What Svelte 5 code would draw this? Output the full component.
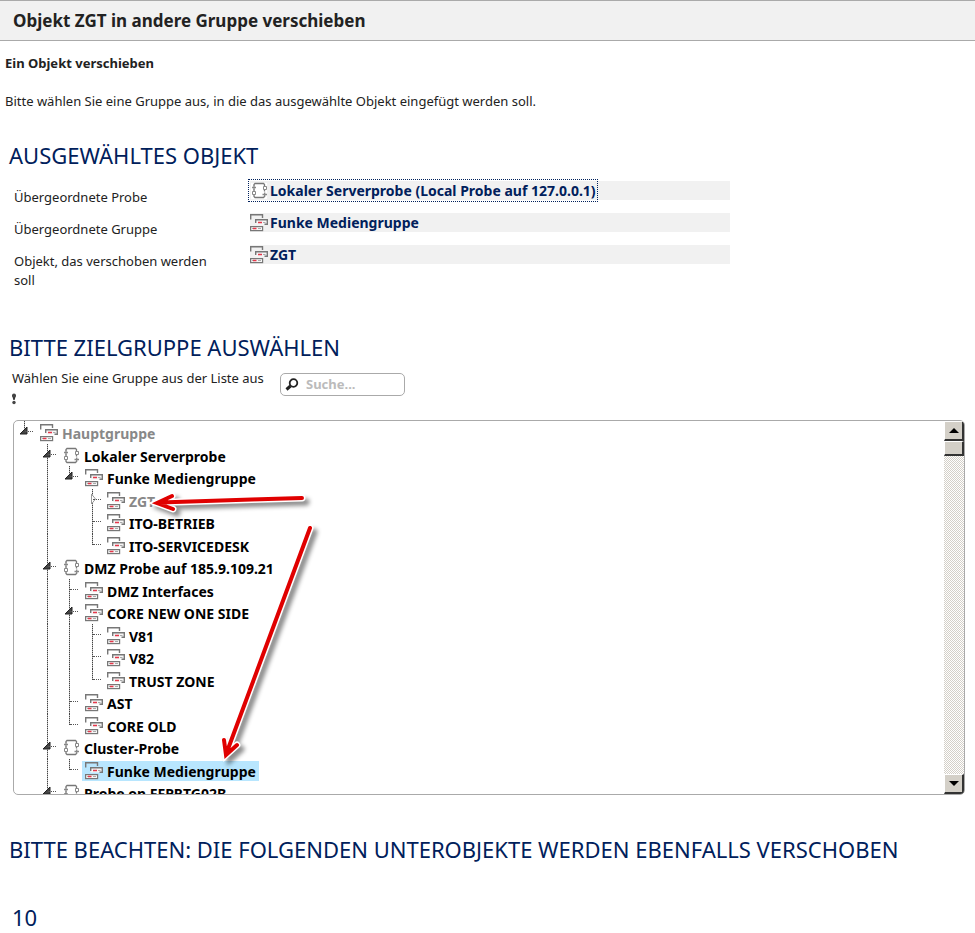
<script>
  const details = [
    { label: 'Übergeordnete Probe', value: 'Lokaler Serverprobe (Local Probe auf 127.0.0.1)', kind: 'probe', focused: true },
    { label: 'Übergeordnete Gruppe', value: 'Funke Mediengruppe', kind: 'group' },
    { label: 'Objekt, das verschoben werden soll', value: 'ZGT', kind: 'group' }
  ];

  // guides: "|" passing line, " " empty, "+" branch, "L" last branch
  const nodes = [
    { name: 'Hauptgruppe', kind: 'group', guides: 'L', toggle: 'open', muted: true },
    { name: 'Lokaler Serverprobe', kind: 'probe', guides: ' +', toggle: 'open' },
    { name: 'Funke Mediengruppe', kind: 'group', guides: ' |L', toggle: 'open' },
    { name: 'ZGT', kind: 'group', guides: ' | +', toggle: 'closed', muted: true },
    { name: 'ITO-BETRIEB', kind: 'group', guides: ' | +' },
    { name: 'ITO-SERVICEDESK', kind: 'group', guides: ' | L' },
    { name: 'DMZ Probe auf 185.9.109.21', kind: 'probe', guides: ' +', toggle: 'open' },
    { name: 'DMZ Interfaces', kind: 'group', guides: ' |+' },
    { name: 'CORE NEW ONE SIDE', kind: 'group', guides: ' |+', toggle: 'open' },
    { name: 'V81', kind: 'group', guides: ' ||+' },
    { name: 'V82', kind: 'group', guides: ' ||+' },
    { name: 'TRUST ZONE', kind: 'group', guides: ' ||L' },
    { name: 'AST', kind: 'group', guides: ' |+' },
    { name: 'CORE OLD', kind: 'group', guides: ' |L' },
    { name: 'Cluster-Probe', kind: 'probe', guides: ' +', toggle: 'open' },
    { name: 'Funke Mediengruppe', kind: 'group', guides: ' |L' },
    { name: 'Probe on FFPRTG02B', kind: 'probe', guides: ' +', toggle: 'open' }
  ];

  const guideClass = { '|': 'pass', ' ': 'empty', '+': 'branch', L: 'last' };
  let selected = $state(15);
</script>

{#snippet icon(kind)}
  {#if kind === 'probe'}
    <svg class="icon" width="20" height="18" viewBox="0 0 20 18" fill="none" aria-hidden="true">
      <rect x="1" y="1" width="16" height="16" fill="#fff" />
      <path d="M4 4V2.500L5 1.500H13.500L14.500 2.500V4.500M14.500 7.500V9.500M4 7V9M4 13V14.500L5 15.500H13.500L14.500 14.500V14" stroke="#777" stroke-width="1.300" />
      <path d="M2 5.500H6M4 3.500V7.500M12.500 12.500H17M14.700 10.500V14.500" stroke="#888" stroke-width="1.300" />
      <path d="M13.500 4.500H16.500V7.500H13.500ZM2.500 9.500H5.500V12.500H2.500Z" fill="#fff" stroke="#888" />
    </svg>
  {:else}
    <svg class="icon" width="20" height="18" viewBox="0 0 20 18" fill="none" stroke="#777" aria-hidden="true">
      <path d="M5.500 5.500H17.500V10.500H5.500Z" fill="#f6f6f6" stroke="none" />
      <path d="M.7 5.500V.7H12.500V4" stroke-width="1.400" />
      <path d="M5.700 9V5.700H17.300V10.300H14.500" stroke-width="1.400" />
      <rect x=".6" y="12.600" width="12" height="4" fill="#f6f6f6" stroke-width="1.200" />
      <path d="M2 14.500H4M8 14.500H11M13 8.500H15.500" stroke="#aaa" />
      <path d="M3 14.500H6.500M8 8.500H12" stroke="#e5374a" stroke-width="1.500" />
    </svg>
  {/if}
{/snippet}

<header><h1>Objekt ZGT in andere Gruppe verschieben</h1></header>

<main>
  <p class="intro"><strong>Ein Objekt verschieben</strong></p>
  <p class="intro text">Bitte wählen Sie eine Gruppe aus, in die das ausgewählte Objekt eingefügt werden soll.</p>

  <h2>Ausgewähltes Objekt</h2>
  <dl>
    {#each details as d}
      <div class="detail">
        <dt>{d.label}</dt>
        <dd><a href="#objekt" class:focused={d.focused}>{@render icon(d.kind)}{d.value}</a></dd>
      </div>
    {/each}
  </dl>

  <h2>Bitte Zielgruppe auswählen</h2>
  <div class="chooser">
    <label for="suche">Wählen Sie eine Gruppe aus der Liste aus
      <svg width="4" height="12" viewBox="0 0 4 12" aria-hidden="true"><path d="M0 2H4L2.600 7H1.400Z" fill="#333" /><circle cx="2" cy="2.500" r="2" fill="#444" /><circle cx="2" cy="9.500" r="1.700" fill="#444" /></svg>
    </label>
    <div class="search">
      <svg width="14" height="13" viewBox="0 0 14 13" fill="none" stroke="#222" aria-hidden="true"><circle cx="8.500" cy="5" r="3.800" stroke-width="1.800" /><path d="M5.500 8L1.500 11.500" stroke-width="3" /></svg>
      <input id="suche" type="text" placeholder="Suche..." />
    </div>
  </div>

  <div class="picker">
    <ul role="tree" aria-label="Zielgruppe">
      {#each nodes as n, i}
        <li role="treeitem" aria-selected={selected === i} aria-level={n.guides.length}>
          {#each n.guides.split('') as g, c}
            <span class="guide {guideClass[g]}">
              {#if n.toggle && c === n.guides.length - 1}
                <svg class="toggle" width="10" height="12" viewBox="0 0 10 12" aria-hidden="true">
                  {#if n.toggle === 'open'}
                    <path d="M8 2V9H1Z" fill="#444" stroke="#222" />
                  {:else}
                    <path d="M4.500 1L8.500 6L4.500 11Z" fill="#fff" stroke="#999" />
                  {/if}
                </svg>
              {/if}
            </span>
          {/each}
          <button class="node" class:muted={n.muted} class:selected={selected === i} onclick={() => (selected = i)}>{@render icon(n.kind)}{n.name}</button>
        </li>
      {/each}
    </ul>
    <div class="scrollbar">
      <button aria-label="Nach oben"><svg width="10" height="5" viewBox="0 0 10 5"><path d="M5 0L10 5H0Z" /></svg></button>
      <div class="thumb"></div>
      <button class="down" aria-label="Nach unten"><svg width="10" height="5" viewBox="0 0 10 5"><path d="M0 0H10L5 5Z" /></svg></button>
    </div>
    <svg class="arrows" width="330" height="373" viewBox="0 0 330 373" fill="none" stroke-linecap="round" stroke-linejoin="miter" aria-hidden="true">
      <g class="arrow">
        <path d="M288 77L146 81.500M158 75L143 82L159 88" stroke="#fff" stroke-width="7" />
        <path d="M288 77L146 81.500M158 75L143 82L159 88" stroke="#e00000" stroke-width="4" />
      </g>
      <g class="arrow">
        <path d="M296 107L214 328M210 319L212 334L223 324" stroke="#fff" stroke-width="7" />
        <path d="M296 107L214 328M210 319L212 334L223 324" stroke="#e00000" stroke-width="4" />
      </g>
    </svg>
  </div>

  <h2>Bitte beachten: Die folgenden Unterobjekte werden ebenfalls verschoben</h2>
  <p class="count">10</p>
</main>

<style>
  :global(body) {
    background: #fff;
    color: #222;
    font: 13px/19px "Noto Sans", "Open Sans", sans-serif;
  }
  header {
    padding: 0 13px;
    background: #f1f1f1;
    border-top: 1px solid #aaa;
    border-bottom: 1px solid #aaa;
  }
  h1 { margin: 0; font-size: 17px; line-height: 39px; }
  main { padding-top: 13px; }
  .intro { margin: 0 5px; }
  .text { margin-top: 19px; }
  h2 {
    margin: 0 9px;
    font-size: 22px;
    line-height: 28px;
    font-weight: 400;
    text-transform: uppercase;
    color: #00205b;
  }
  .text + h2 { margin-top: 30px; }
  dl { margin: 12px 14px 43px; }
  .detail { display: flex; min-height: 32px; align-items: flex-start; }
  dt { box-sizing: border-box; width: 236px; padding: 7px 36px 0 0; flex: none; }
  dd { margin: 0; width: 480px; height: 19px; background: #f1f1f1; }
  dd a {
    display: inline-flex;
    align-items: center;
    height: 19px;
    color: #00205b;
    font-size: 14px;
    font-weight: 700;
    text-decoration: none;
    white-space: nowrap;
  }
  .focused { outline: 1px dotted #00205b; outline-offset: 1px; }
  .icon { flex: none; }

  .chooser { display: flex; margin: 8px 12px 0; height: 51px; align-items: flex-start; }
  label { width: 264px; margin-right: 4px; }
  label svg { display: block; margin-top: 5px; }
  .search {
    display: flex;
    align-items: center;
    box-sizing: border-box;
    width: 125px;
    height: 23px;
    margin-top: 4px;
    padding: 0 4px;
    border: 1px solid #aaa;
    border-radius: 5px;
  }
  .search svg { flex: none; }
  input {
    min-width: 0;
    flex: 1;
    margin-left: 7px;
    padding: 0;
    border: 0;
    outline: 0;
    background: none;
    font: 700 13px/19px "Noto Sans", sans-serif;
  }
  input::placeholder { color: #bbb; opacity: 1; }

  .picker {
    position: relative;
    display: flex;
    height: 373px;
    margin: 0 10px 40px 13px;
    overflow: hidden;
    border: 1px solid #aaa;
    border-radius: 5px;
  }
  ul { flex: 1; margin: 0; padding: 0; list-style: none; overflow: hidden; }
  li { display: flex; height: 22px; }
  li:nth-child(odd) { height: 23px; }
  .guide { position: relative; width: 23px; flex: none; }
  .guide:nth-child(even) { width: 22px; }
  .guide::before {
    content: "";
    position: absolute;
    left: 10px;
    top: 0;
    bottom: 0;
    width: 1px;
    background: repeating-linear-gradient(#444 0 1px, #bbb 1px 2px);
  }
  .empty::before { display: none; }
  .last::before { bottom: 11px; }
  .branch::after, .last::after {
    content: "";
    position: absolute;
    left: 11px;
    top: 10px;
    width: 8px;
    border-top: 1px dotted #555;
  }
  .toggle { position: absolute; left: 5px; top: 4px; }
  .node {
    display: flex;
    align-items: center;
    height: 20px;
    margin: 2px 0 0;
    padding: 0 3px;
    border: 0;
    background: none;
    color: #000;
    font: 700 14px/19px "Noto Sans", sans-serif;
    white-space: nowrap;
  }
  .node .icon { margin-right: 2px; }
  .muted { color: #888; }
  .selected { background: #b8e6fe; }

  .scrollbar {
    display: flex;
    flex-direction: column;
    width: 20px;
    flex: none;
    background: repeating-conic-gradient(#d4d0c8 0 25%, #fff 0 50%) 0 0 / 2px 2px;
  }
  .scrollbar button, .thumb {
    display: flex;
    align-items: center;
    justify-content: center;
    box-sizing: border-box;
    height: 20px;
    padding: 0;
    background: #d4d0c8;
    border: 1px solid #fff;
    border-right: 2px solid #333;
    border-bottom: 2px solid #333;
  }
  .thumb { height: 15px; }
  .scrollbar .down { margin-top: auto; }
  .arrows { position: absolute; left: 0; top: 0; pointer-events: none; }
  .arrow { filter: drop-shadow(4px 4px 2px rgba(0, 0, 0, 0.45)); }
  .count { margin: 39px 12px 0; font-size: 22px; line-height: 30px; color: #00205b; }
</style>
